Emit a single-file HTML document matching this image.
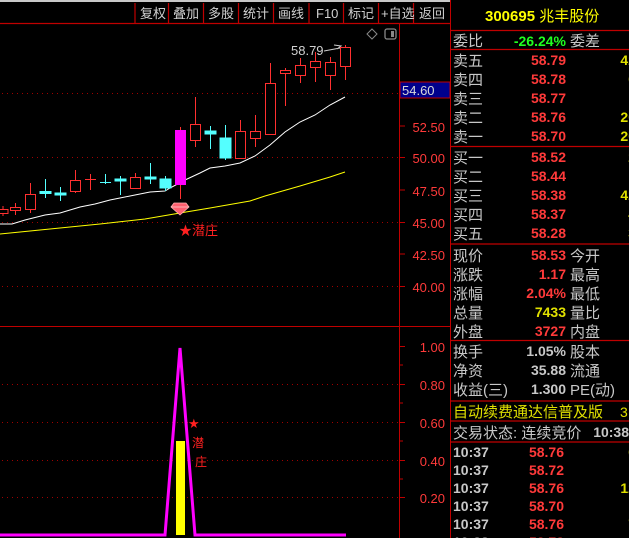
<!DOCTYPE html>
<html><head><meta charset="utf-8"><style>
html,body{margin:0;padding:0;background:#000;width:629px;height:538px;overflow:hidden}
svg{display:block}
.l{font-family:"Liberation Sans","Noto Sans CJK SC",sans-serif;font-size:15px;fill:#c8c8c8}
.n{font-family:"Liberation Sans",sans-serif;font-size:14px;font-weight:bold}
.ax{font-family:"Liberation Sans",sans-serif;font-size:13px;fill:#ff3a3a}
.tb{font-family:"Liberation Sans","Noto Sans CJK SC",sans-serif;font-size:13px;fill:#d0d0d0}
</style></head><body>
<svg width="629" height="538" viewBox="0 0 629 538">
<rect width="629" height="538" fill="#000"/>
<rect x="0" y="0" width="450" height="2" fill="#c8c8c8"/>
<!-- toolbar -->
<g stroke="#c00000" stroke-width="1.2">
<line x1="0" y1="23.5" x2="450" y2="23.5"/>
<line x1="135" y1="3" x2="135" y2="23"/><line x1="168.5" y1="3" x2="168.5" y2="23"/><line x1="203.5" y1="3" x2="203.5" y2="23"/><line x1="238.5" y1="3" x2="238.5" y2="23"/><line x1="273.5" y1="3" x2="273.5" y2="23"/><line x1="309" y1="3" x2="309" y2="23"/><line x1="343.5" y1="3" x2="343.5" y2="23"/><line x1="378.5" y1="3" x2="378.5" y2="23"/><line x1="413.5" y1="3" x2="413.5" y2="23"/>
</g>
<text class="tb" x="140" y="18">复权</text><text class="tb" x="173" y="18">叠加</text><text class="tb" x="208" y="18">多股</text><text class="tb" x="243" y="18">统计</text><text class="tb" x="278" y="18">画线</text><text class="tb" x="316" y="18">F10</text><text class="tb" x="348" y="18">标记</text><text class="tb" x="381" y="18">+自选</text><text class="tb" x="419" y="18">返回</text>
<!-- axes -->
<line x1="399.5" y1="24" x2="399.5" y2="538" stroke="#c00000"/>
<line x1="0" y1="326.5" x2="450" y2="326.5" stroke="#c00000"/>
<line x1="450.5" y1="0" x2="450.5" y2="538" stroke="#c00000"/>
<g stroke="#a00000" stroke-dasharray="1,4">
<line x1="2" y1="93.5" x2="399" y2="93.5"/><line x1="2" y1="157.5" x2="399" y2="157.5"/><line x1="2" y1="222.5" x2="399" y2="222.5"/><line x1="2" y1="286.5" x2="399" y2="286.5"/>
<line x1="2" y1="384.5" x2="399" y2="384.5"/><line x1="2" y1="422.5" x2="399" y2="422.5"/><line x1="2" y1="460.5" x2="399" y2="460.5"/><line x1="2" y1="497.5" x2="399" y2="497.5"/>
</g>
<g stroke="#c00000">
<line x1="400" y1="126" x2="405" y2="126"/><line x1="400" y1="157.5" x2="405" y2="157.5"/><line x1="400" y1="190" x2="405" y2="190"/><line x1="400" y1="222.5" x2="405" y2="222.5"/><line x1="400" y1="254" x2="405" y2="254"/><line x1="400" y1="286.5" x2="405" y2="286.5"/>
<line x1="400" y1="346.5" x2="405" y2="346.5"/><line x1="400" y1="365" x2="403" y2="365"/><line x1="400" y1="384.5" x2="405" y2="384.5"/><line x1="400" y1="403" x2="403" y2="403"/><line x1="400" y1="422.5" x2="405" y2="422.5"/><line x1="400" y1="441" x2="403" y2="441"/><line x1="400" y1="460.5" x2="405" y2="460.5"/><line x1="400" y1="479" x2="403" y2="479"/><line x1="400" y1="497.5" x2="405" y2="497.5"/>
</g>
<g class="ax" text-anchor="end">
<text x="445" y="132">52.50</text><text x="445" y="163">50.00</text><text x="445" y="196">47.50</text><text x="445" y="228">45.00</text><text x="445" y="260">42.50</text><text x="445" y="292">40.00</text>
<text x="445" y="352">1.00</text><text x="445" y="390">0.80</text><text x="445" y="428">0.60</text><text x="445" y="466">0.40</text><text x="445" y="503">0.20</text>
</g>
<rect x="400" y="82" width="50" height="16" fill="#00008c" stroke="#c00000"/>
<text x="402" y="95" font-family="Liberation Sans" font-size="13" fill="#d8d8d8">54.60</text>
<!-- icons -->
<path d="M372 29 L377 34 L372 39 L367 34 Z" fill="none" stroke="#888"/>
<rect x="385" y="29" width="11" height="10" rx="2" fill="none" stroke="#888" stroke-width="1.3"/><rect x="391" y="31" width="3" height="6" fill="#888"/>
<text x="291" y="55" font-family="Liberation Sans" font-size="13" fill="#d0d0d0">58.79</text>
<path d="M324 51 L340 48 M334 45 L341 46 L337 49" stroke="#ccc" fill="none"/>
<!-- MA lines -->
<polyline fill="none" stroke="#fff" stroke-width="1" points="0,224 12,224 25,220 45,215 60,213 80,207 95,204 110,200 130,196 150,192 165,191 170,188 185,180 200,173 210,168 225,166 240,163 255,156 270,145 285,132 300,122 315,115 330,105 345,97"/>
<polyline fill="none" stroke="#ffff00" stroke-width="1" points="0,234 30,231 60,228 100,224 145,219 180,213 210,208 250,201 265,196 300,186 330,177 345,172"/>
<!-- candles -->
<g stroke="#ff3030" fill="#000" stroke-width="1">
<line x1="3" y1="206" x2="3" y2="216"/><rect x="-2" y="209.5" width="10" height="4"/>
<line x1="15.5" y1="203" x2="15.5" y2="215"/><rect x="10.5" y="207.5" width="10" height="3"/>
<line x1="30.5" y1="183" x2="30.5" y2="213"/><rect x="25.5" y="194.5" width="10" height="15"/>
<line x1="75.5" y1="170" x2="75.5" y2="193"/><rect x="70.5" y="180.5" width="10" height="11"/>
<line x1="90.5" y1="174" x2="90.5" y2="190"/><line x1="85" y1="179.5" x2="96" y2="179.5"/>
<line x1="135.5" y1="173" x2="135.5" y2="189"/><rect x="130.5" y="177.5" width="10" height="11"/>
<line x1="195.5" y1="97" x2="195.5" y2="147"/><rect x="190.5" y="124.5" width="10" height="16"/>
<line x1="240.5" y1="120" x2="240.5" y2="158"/><rect x="235.5" y="131.5" width="10" height="27"/>
<line x1="255.5" y1="115" x2="255.5" y2="147"/><rect x="250.5" y="131.5" width="10" height="7"/>
<line x1="270.5" y1="63" x2="270.5" y2="135"/><rect x="265.5" y="83.5" width="10" height="51"/>
<line x1="285.5" y1="68" x2="285.5" y2="106"/><rect x="280.5" y="70.5" width="10" height="3"/>
<line x1="300.5" y1="58" x2="300.5" y2="83"/><rect x="295.5" y="65.5" width="10" height="10"/>
<line x1="315.5" y1="52" x2="315.5" y2="82"/><rect x="310.5" y="61.5" width="10" height="6"/>
<line x1="330.5" y1="57" x2="330.5" y2="90"/><rect x="325.5" y="62.5" width="10" height="13"/>
<line x1="345.5" y1="45" x2="345.5" y2="80"/><rect x="340.5" y="47.5" width="10" height="19"/>
</g>
<g stroke="#54ffff" fill="#54ffff" stroke-width="1">
<line x1="45.5" y1="179" x2="45.5" y2="198"/><rect x="40" y="191.5" width="11" height="2"/>
<line x1="60.5" y1="187" x2="60.5" y2="201"/><rect x="55" y="193" width="11" height="2"/>
<line x1="105.5" y1="174" x2="105.5" y2="184"/><line x1="100" y1="182.5" x2="111" y2="182.5"/>
<line x1="120.5" y1="176" x2="120.5" y2="195"/><rect x="115" y="179" width="11" height="2"/>
<line x1="150.5" y1="163" x2="150.5" y2="184"/><rect x="145" y="177" width="11" height="2"/>
<line x1="165.5" y1="176" x2="165.5" y2="191"/><rect x="160" y="179" width="11" height="9"/>
<line x1="210.5" y1="126" x2="210.5" y2="149"/><rect x="205" y="131" width="11" height="3"/>
<line x1="225.5" y1="125" x2="225.5" y2="160"/><rect x="220" y="138" width="11" height="20"/>
</g>
<line x1="180.5" y1="127" x2="180.5" y2="199" stroke="#ff3030"/>
<rect x="175" y="130" width="11" height="55" fill="#ff00ff"/>
<!-- gem -->
<path d="M174 203 L186 203 L189 207 L180 215 L171 207 Z" fill="#ff6070" stroke="#ffb0b0" stroke-width="0.8"/>
<path d="M171 207 L189 207" stroke="#ffd0d0" stroke-width="0.7"/>
<text x="179" y="235" font-family="Liberation Sans,Noto Sans CJK SC,sans-serif" font-size="13" fill="#ff2020">★潜庄</text>
<!-- lower indicator -->
<polyline fill="none" stroke="#ff00ff" stroke-width="3" points="0,535 165,535 180,348 195,535 346,535"/>
<rect x="176" y="441" width="9" height="94" fill="#ffff00"/>
<text x="188" y="428" font-family="Liberation Sans,sans-serif" font-size="13" fill="#ff2020">★</text>
<text x="192" y="447" font-family="Noto Sans CJK SC,sans-serif" font-size="12" fill="#ff2020">潜</text>
<text x="195" y="466" font-family="Noto Sans CJK SC,sans-serif" font-size="12" fill="#ff2020">庄</text>
<!-- right panel -->
<g stroke="#c00000" stroke-width="1.2">
<line x1="451" y1="30.5" x2="629" y2="30.5"/><line x1="451" y1="49.5" x2="629" y2="49.5"/><line x1="451" y1="146.5" x2="629" y2="146.5"/><line x1="451" y1="244" x2="629" y2="244"/><line x1="451" y1="340.5" x2="629" y2="340.5"/><line x1="451" y1="401" x2="629" y2="401"/><line x1="451" y1="421" x2="629" y2="421"/><line x1="451" y1="442" x2="629" y2="442"/>
</g>
<text x="485" y="21" font-family="Liberation Sans,Noto Sans CJK SC,sans-serif" font-size="15" font-weight="bold" fill="#ffff00">300695 <tspan font-weight="normal">兆丰股份</tspan></text>
<g class="l">
<text x="453" y="46">委比</text><text x="570" y="46">委差</text>
<text x="453" y="66">卖五</text><text x="453" y="85">卖四</text><text x="453" y="104">卖三</text><text x="453" y="123">卖二</text><text x="453" y="142">卖一</text>
<text x="453" y="163">买一</text><text x="453" y="182">买二</text><text x="453" y="201">买三</text><text x="453" y="220">买四</text><text x="453" y="239">买五</text>
<text x="453" y="261">现价</text><text x="570" y="261">今开</text>
<text x="453" y="280">涨跌</text><text x="570" y="280">最高</text>
<text x="453" y="299">涨幅</text><text x="570" y="299">最低</text>
<text x="453" y="318">总量</text><text x="570" y="318">量比</text>
<text x="453" y="337">外盘</text><text x="570" y="337">内盘</text>
<text x="453" y="357">换手</text><text x="570" y="357">股本</text>
<text x="453" y="376">净资</text><text x="570" y="376">流通</text>
<text x="453" y="395">收益(三)</text><text x="570" y="395">PE(动)</text>
<text x="453" y="438">交易状态: 连续竞价</text>
</g>
<text x="453" y="417" font-family="Liberation Sans,Noto Sans CJK SC,sans-serif" font-size="15" fill="#e0e000">自动续费通达信普及版</text>
<text x="620" y="417" font-family="Liberation Sans,sans-serif" font-size="14" fill="#e0e000">3</text>
<g class="n" text-anchor="end">
<text x="566" y="46" fill="#20ff20">-26.24%</text>
<g fill="#ff3a3a">
<text x="566" y="65">58.79</text><text x="566" y="84">58.78</text><text x="566" y="103">58.77</text><text x="566" y="122">58.76</text><text x="566" y="141">58.70</text>
<text x="566" y="162">58.52</text><text x="566" y="181">58.44</text><text x="566" y="200">58.38</text><text x="566" y="219">58.37</text><text x="566" y="238">58.28</text>
<text x="566" y="260">58.53</text><text x="566" y="279">1.17</text><text x="566" y="298">2.04%</text><text x="566" y="336">3727</text>
</g>
<text x="566" y="317" fill="#e0e000">7433</text>
<g fill="#c8c8c8"><text x="566" y="356">1.05%</text><text x="566" y="375">35.88</text><text x="566" y="394">1.300</text></g>
<g fill="#e0e000">
<text x="636" y="65">42</text><text x="636" y="84">6</text><text x="636" y="103">1</text><text x="636" y="122">20</text><text x="636" y="141">20</text>
<text x="636" y="162">2</text><text x="636" y="181">1</text><text x="636" y="200">42</text><text x="636" y="219">4</text><text x="636" y="238">3</text>
<text x="636" y="457">6</text><text x="636" y="475">1</text><text x="636" y="493">12</text><text x="636" y="511">1</text><text x="636" y="529">7</text>
</g>
<text x="629" y="437" fill="#c8c8c8">10:38</text>
<g fill="#ff3a3a"><text x="564" y="457">58.76</text><text x="564" y="475">58.72</text><text x="564" y="493">58.76</text><text x="564" y="511">58.70</text><text x="564" y="529">58.76</text><text x="564" y="547">58.78</text></g>
</g>
<g class="n" fill="#c8c8c8">
<text x="453" y="457">10:37</text><text x="453" y="475">10:37</text><text x="453" y="493">10:37</text><text x="453" y="511">10:37</text><text x="453" y="529">10:37</text><text x="453" y="547">10:38</text>
</g>
</svg>
</body></html>
